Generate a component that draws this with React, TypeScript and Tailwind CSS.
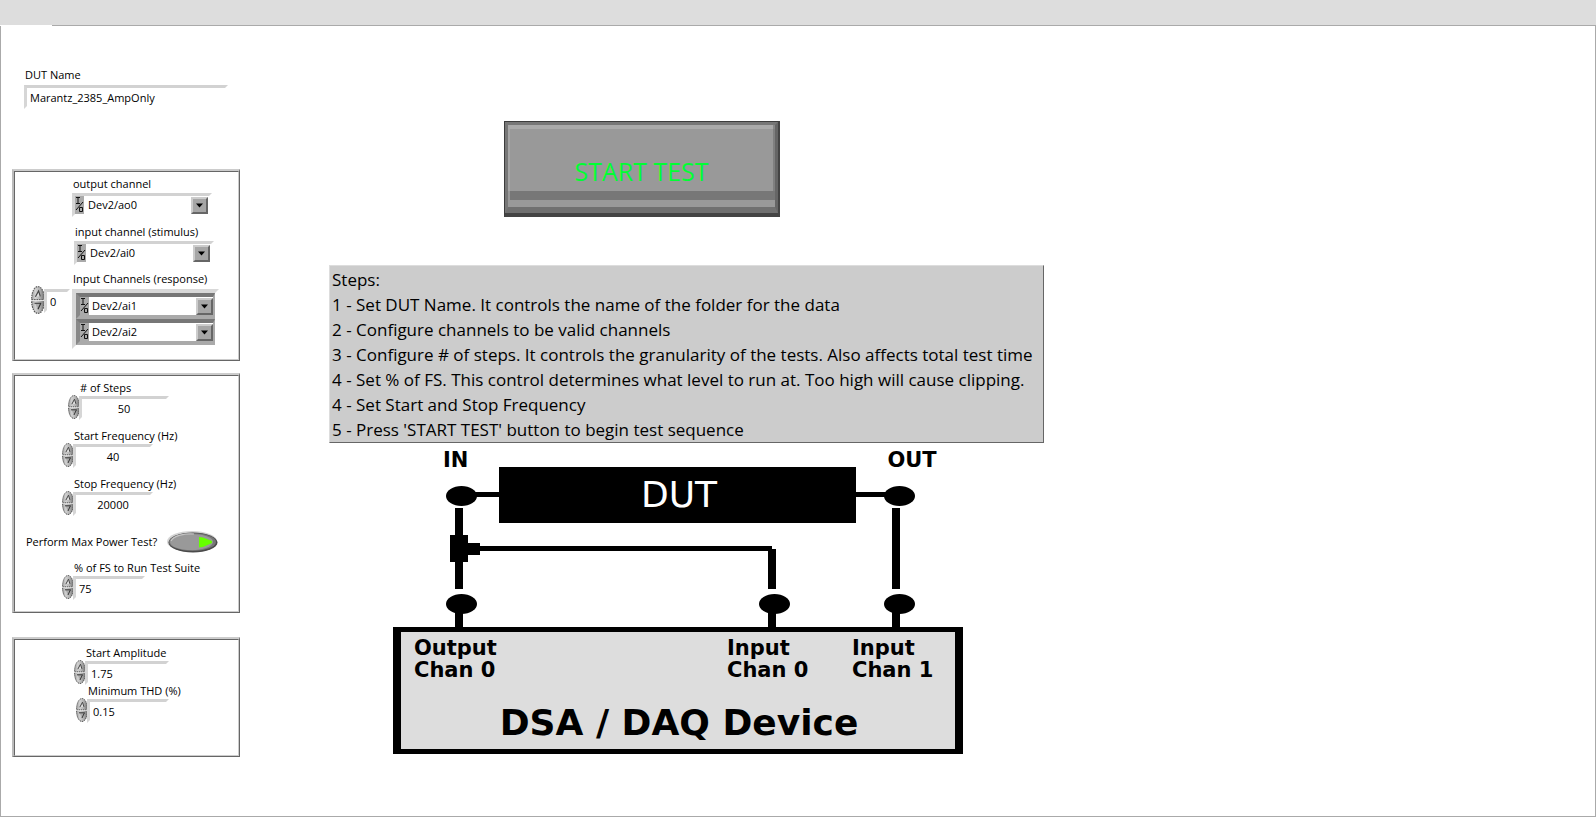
import { useId, useState, type ReactNode } from "react";

const bevel = "border-3 border-t-[#d2d2d2] border-l-[#d6d6d6] border-r-transparent border-b-transparent";

function Panel({ className, children }: { className: string; children: ReactNode }) {
  return (
    <section className={`border-2 border-r border-b border-t-[#ccc] border-l-[#bbb] border-r-[#666] border-b-[#666] ${className}`}>
      <div className="flex h-full flex-col items-start border border-t-[#666] border-l-[#666] border-r-[#ccc] border-b-[#ccc]">
        {children}
      </div>
    </section>
  );
}

function ArrowHalf({ down, tall, onClick, label }: { down?: boolean; tall?: boolean; onClick: () => void; label: string }) {
  const gradient = useId();
  return (
    <button type="button" aria-label={label} onClick={onClick} className="block">
      <svg viewBox="0 0 12 12" preserveAspectRatio="none" className={tall ? "block h-3.5 w-3.5" : "block h-3 w-3"}>
        <defs>
          <linearGradient id={gradient}>
            <stop offset="0" stopColor="#a0a0a0" />
            <stop offset="0.3" stopColor="#d2d2d2" />
            <stop offset="0.65" stopColor="#b0b0b0" />
            <stop offset="1" stopColor="#707070" />
          </linearGradient>
        </defs>
        {down ? (
          <>
            <path d="M.5 .3H11.5C11.5 6.5 9.2 11.5 6 11.5S.5 6.5 .5 .3Z" fill={`url(#${gradient})`} stroke="#555" strokeWidth="1" strokeDasharray="1.4 .7" />
            <path d="M3.5 2.8H8.5L6 8Z" fill="#aaa" />
            <path d="M3 2.8H8.8M6 8L8.300 3" stroke="#333" strokeWidth="1" />
            <path d="M0 .4H12" stroke="#eee" strokeWidth=".8" />
          </>
        ) : (
          <>
            <path d="M.5 11.7H11.5C11.5 5.5 9.2 .5 6 .5S.5 5.5 .5 11.7Z" fill={`url(#${gradient})`} stroke="#666" strokeWidth="1" strokeDasharray="1.4 .7" />
            <path d="M6.5 4.200L3.8 9H8.4Z" fill="#ddd" />
            <path d="M3.8 9.200L6.500 4.200L8 9" fill="none" stroke="#444" strokeWidth="1" />
          </>
        )}
      </svg>
    </button>
  );
}

function Spinner({ step, tall, name }: { step: (by: number) => void; tall?: boolean; name: string }) {
  return (
    <div className={`-mr-px flex shrink-0 flex-col ${tall ? "-mt-[3px]" : "-mt-px"}`}>
      <ArrowHalf tall={tall} label={`Increase ${name}`} onClick={() => step(1)} />
      <ArrowHalf down tall={tall} label={`Decrease ${name}`} onClick={() => step(-1)} />
    </div>
  );
}

function NumberField(props: { label: string; initial: string; className: string; frame: string; centered?: boolean }) {
  const id = useId();
  const [value, setValue] = useState(props.initial);
  return (
    <div className={props.className}>
      <label htmlFor={id} className="block pl-3 leading-4 whitespace-nowrap">{props.label}</label>
      <div className="flex items-start">
        <Spinner name={props.label} step={(by) => setValue(String(Number(value) + by))} />
        <div className={`${bevel} ${props.frame}`}>
          <input
            id={id}
            value={value}
            onChange={(e) => setValue(e.target.value)}
            className={`block h-full w-full bg-white px-[3px] outline-none ${props.centered ? "text-center" : ""}`}
          />
        </div>
      </div>
    </div>
  );
}

function ChannelSelect({ id, label, value, cell }: { id?: string; label?: string; value: string; cell?: boolean }) {
  return (
    <div className="flex h-[18px] w-[133px] bg-white">
      <svg viewBox="0 0 9 18" className="h-[18px] w-[9px] shrink-0" aria-hidden="true">
        <rect width="9" height="18" fill="#aaa" />
        <path d="M1 1.500H5M3 1.500V7M1 7.500H5M8 6L1 14M4.500 12V15.500H7.500V11.500H4.500Z" fill="none" stroke="#111" strokeWidth="1" />
      </svg>
      <div className="relative flex-1">
        <select
          id={id}
          aria-label={label}
          defaultValue={value}
          className={`block h-full w-full appearance-none bg-white outline-none ${cell ? "pl-[3px]" : "pl-1"}`}
        >
          <option>{value}</option>
        </select>
        <svg viewBox="0 0 17 17" className="pointer-events-none absolute top-px right-0 h-[17px] w-[17px]" aria-hidden="true">
          <rect width="17" height="17" fill="#666" />
          <path d="M0 0H17L15 2H2V15L0 17Z" fill="#ccc" />
          <rect x="2" y="2" width="13" height="13" fill="#a6a6a6" />
          <path d="M5 6.500H12L8.500 10.500Z" fill="#000" />
        </svg>
      </div>
    </div>
  );
}

function ChannelField({ label, value, className }: { label: string; value: string; className: string }) {
  const id = useId();
  return (
    <div className={className}>
      <label htmlFor={id} className="block pl-px leading-4 whitespace-nowrap">{label}</label>
      <div className={`mt-px h-6 w-[140px] ${bevel}`}>
        <ChannelSelect id={id} value={value} />
      </div>
    </div>
  );
}

function ArrayCell({ label, value }: { label: string; value: string }) {
  return (
    <div className="h-[26px] w-[139px] border-4 border-r-2 border-t-[#777] border-l-[#888] border-r-[#aaa] border-b-[#aaa] bg-[#aaa]">
      <ChannelSelect label={label} value={value} cell />
    </div>
  );
}

function ResponseChannels() {
  const [index, setIndex] = useState(0);
  return (
    <div className="mt-1.5 ml-4">
      <div className="pl-[42px] leading-4 whitespace-nowrap" id="response-label">Input Channels (response)</div>
      <div className="mt-0.5 flex items-start">
        <Spinner tall name="index" step={(by) => setIndex(Math.max(0, index + by))} />
        <div className={`mr-0.5 h-6 w-[26px] ${bevel}`}>
          <input
            aria-label="Index"
            value={index}
            onChange={(e) => setIndex(Number(e.target.value) || 0)}
            className="block h-full w-full bg-white pl-[3px] outline-none"
          />
        </div>
        <div role="group" aria-labelledby="response-label" className="w-[147px] border-4 border-t-[#d8d8d8] border-l-[#d8d8d8] border-r-transparent border-b-transparent">
          <ArrayCell label="Response channel 1" value="Dev2/ai1" />
          <ArrayCell label="Response channel 2" value="Dev2/ai2" />
        </div>
      </div>
    </div>
  );
}

function PowerToggle() {
  const [on, setOn] = useState(true);
  return (
    <div className="mt-[15px] ml-[11px] flex h-[22px] items-center gap-2">
      <label htmlFor="max-power" className="w-[133px] whitespace-nowrap">Perform Max Power Test?</label>
      <div className="relative h-[22px] w-[51px]">
        <input
          id="max-power"
          type="checkbox"
          checked={on}
          onChange={(e) => setOn(e.target.checked)}
          className="absolute inset-0 h-full w-full opacity-0"
        />
        <svg viewBox="0 0 51 22" className="pointer-events-none block h-full w-full" aria-hidden="true">
          <ellipse cx="25" cy="10.500" rx="25" ry="10.500" fill="#d4d4d4" />
          <ellipse cx="26" cy="11.500" rx="24.500" ry="10" fill="#4a4a4a" />
          <ellipse cx="25.500" cy="11" rx="23.500" ry="9" fill="#777" />
          <ellipse cx="24.500" cy="11" rx="21.500" ry="8" fill="#999" />
          <path d="M4 10C7 4 18 2.500 27 3" fill="none" stroke="#c4c4c4" strokeWidth="1.200" />
          {on && <path d="M32 6L36 6.500L45 10V12L36 16L32 16.500Z" fill="#66ff00" />}
        </svg>
      </div>
    </div>
  );
}

const steps = [
  "Steps:",
  "1 - Set DUT Name. It controls the name of the folder for the data",
  "2 - Configure channels to be valid channels",
  "3 - Configure # of steps. It controls the granularity of the tests. Also affects total test time",
  "4 - Set % of FS. This control determines what level to run at. Too high will cause clipping.",
  "4 - Set Start and Stop Frequency",
  "5 - Press 'START TEST' button to begin test sequence",
];

function StartButton() {
  return (
    <button
      type="button"
      className="ml-[175px] block h-24 w-[276px] border border-r-2 border-b-4 border-t-[#3c3c3c] border-l-[#3c3c3c] border-r-[#444] border-b-[#444]"
    >
      <span className="flex h-full flex-col border-3 border-b-6 border-t-[#777] border-l-[#777] border-r-[#666] border-b-[#707070] bg-[#999]">
        <span className="h-1 border-r-2 border-r-[#888] bg-[#aaa]" />
        <span className="flex-1 border-x-2 border-l-[#a6a6a6] border-r-[#808080] pt-6 text-[25px] leading-9 text-[#00ff33]">
          START TEST
        </span>
        <span className="ml-0.5 h-[9px] bg-[#777]" />
        <span className="h-[7px]" />
      </span>
    </button>
  );
}

function WiringDiagram() {
  return (
    <svg viewBox="0 0 570 310" className="mt-px ml-16 block h-[310px] w-[570px] font-['DejaVu_Sans',sans-serif]" role="img" aria-label="DUT wiring">
      <rect x="106" y="23" width="357" height="56" />
      <path d="M80 48H106V53H80ZM463 48H495V53H463Z" />
      <path d="M62 64H70V145H62ZM57 91H75V118H57ZM75 99H87V111H75ZM87 102H379V105H383V145H375V107H87ZM499 64H507V145H499Z" />
      <g>
        <ellipse cx="68.500" cy="52" rx="15.500" ry="10" />
        <ellipse cx="506.500" cy="52" rx="15.500" ry="10" />
        <ellipse cx="68.500" cy="160" rx="15.500" ry="10" />
        <ellipse cx="381.500" cy="160" rx="15.500" ry="10" />
        <ellipse cx="506.500" cy="160" rx="15.500" ry="10" />
      </g>
      <path d="M62 165H70V185H62ZM375 165H383V185H375ZM499 165H507V185H499Z" />
      <rect y="183" width="570" height="127" />
      <rect x="8" y="188" width="554" height="117" fill="#ddd" />
      <g className="text-[21px] font-bold">
        <text x="50" y="23">IN</text>
        <text x="519" y="23" textAnchor="middle">OUT</text>
        <text x="21" y="211">Output</text>
        <text x="21" y="233">Chan 0</text>
        <text x="334" y="211">Input</text>
        <text x="334" y="233">Chan 0</text>
        <text x="459" y="211">Input</text>
        <text x="459" y="233">Chan 1</text>
      </g>
      <text x="286" y="63" textAnchor="middle" fill="#fff" className="text-[36px]">DUT</text>
      <text x="286" y="291" textAnchor="middle" className="text-[36px] font-bold">DSA / DAQ Device</text>
    </svg>
  );
}

export default function App() {
  return (
    <div className="flex min-h-screen flex-col bg-white font-['Open_Sans','Noto_Sans',sans-serif] text-[11px] text-black">
      <header className="h-[25px] bg-[#ddd]" />
      <div className="ml-[52px] h-px bg-[#aaa]" />
      <div className="flex flex-1 items-start border-x border-b border-[#aaa]">
        <aside className="w-[239px] shrink-0 pt-[41px] pl-[11px]">
          <div className="pl-3">
            <label htmlFor="dut-name" className="block pl-px leading-4">DUT Name</label>
            <div className={`mt-0.5 h-6 w-[204px] ${bevel}`}>
              <input id="dut-name" defaultValue="Marantz_2385_AmpOnly" className="block h-full w-full bg-white pl-[3px] outline-none" />
            </div>
          </div>
          <Panel className="mt-[60px] h-48">
            <ChannelField label="output channel" value="Dev2/ao0" className="mt-1 ml-[57px]" />
            <ChannelField label="input channel (stimulus)" value="Dev2/ai0" className="mt-[7px] ml-[59px]" />
            <ResponseChannels />
          </Panel>
          <Panel className="mt-3 h-60">
            <NumberField label="# of Steps" initial="50" centered className="mt-1 ml-[53px]" frame="h-6 w-[90px]" />
            <NumberField label="Start Frequency (Hz)" initial="40" centered className="mt-2 ml-[47px]" frame="h-6 w-20" />
            <NumberField label="Stop Frequency (Hz)" initial="20000" centered className="mt-2 ml-[47px]" frame="h-6 w-20" />
            <PowerToggle />
            <NumberField label="% of FS to Run Test Suite" initial="75" className="mt-[7px] ml-[47px]" frame="h-6 w-[72px]" />
          </Panel>
          <Panel className="mt-6 h-[120px]">
            <NumberField label="Start Amplitude" initial="1.75" className="mt-[5px] ml-[59px] h-[38px]" frame="h-6 w-[84px]" />
            <NumberField label="Minimum THD (%)" initial="0.15" className="ml-[61px]" frame="h-6 w-[82px]" />
          </Panel>
        </aside>
        <main className="ml-[89px] pt-[95px]">
          <StartButton />
          <ol className="mt-12 w-[715px] border border-t-[#ddd] border-l-[#ddd] border-r-[#666] border-b-[#666] bg-[#ccc] pt-px pl-0.5 text-[17px] leading-[25px] whitespace-nowrap">
            {steps.map((line) => (
              <li key={line}>{line}</li>
            ))}
          </ol>
          <WiringDiagram />
        </main>
      </div>
    </div>
  );
}
